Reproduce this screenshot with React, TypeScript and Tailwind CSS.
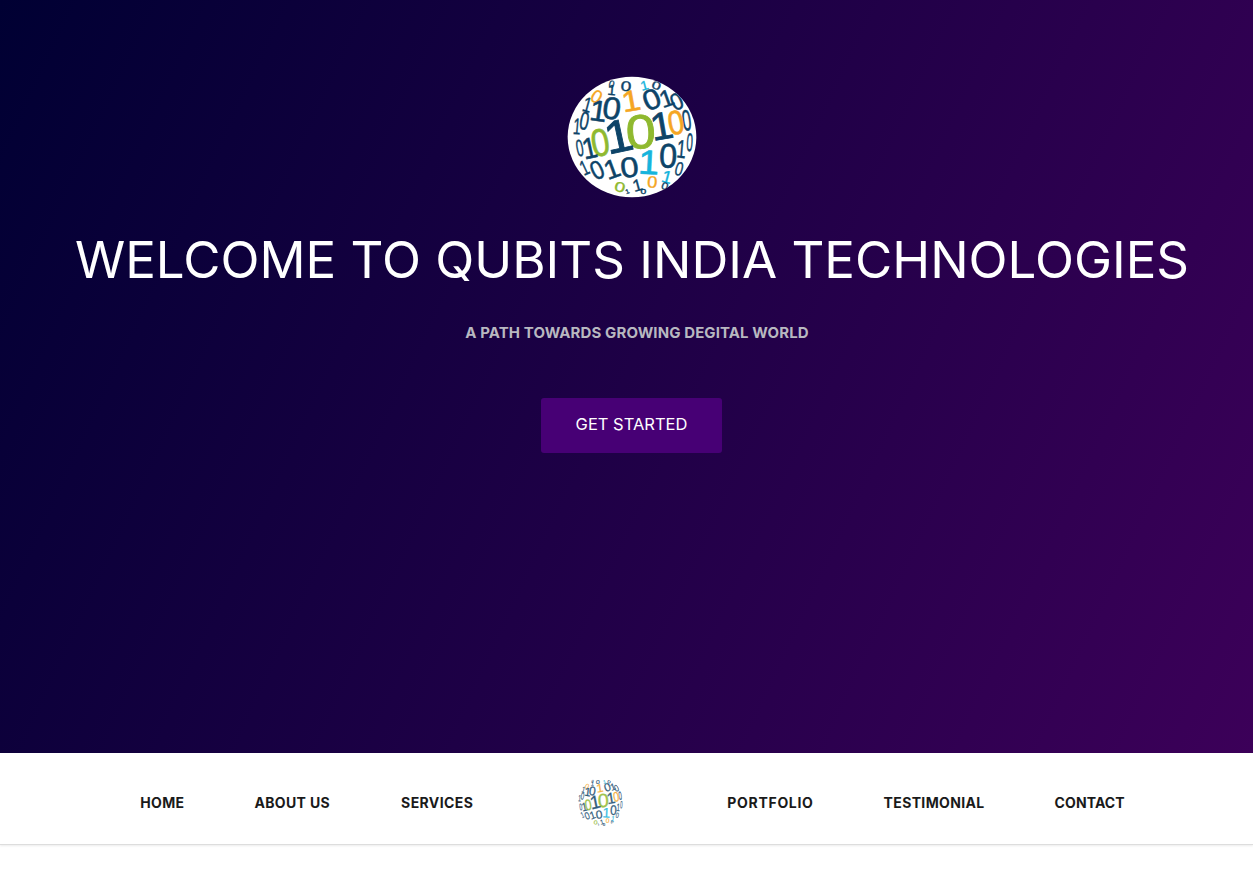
type G = [string, number, number, number, number, string, number?];
const D = "#0d4468", O = "#f5a623", L = "#8fb92f", C = "#16b4dc";
const glyphs: G[] = [
  ["0", 185, 70, 22, 15, D, 1], ["0", 228, 76, 30, 5, D, 1.4], ["1", 283, 74, 28, -15, C, 1.1], ["0", 320, 74, 24, 20, D, 1.5],
  ["0", 140, 107, 40, 30, O, 1], ["1", 185, 88, 32, 5, D, 1.05], ["1", 243, 120, 64, -10, O, 1.15], ["0", 305, 115, 62, -22, D, 1.1], ["1", 350, 112, 52, -20, D, 1.05], ["0", 380, 122, 52, -25, D, 0.9],
  ["1", 112, 132, 46, 15, D, 0.75], ["1", 145, 150, 64, 8, D, 1.05], ["0", 185, 142, 68, 8, D, 1.05], ["0", 410, 178, 64, -8, D, 0.55],
  ["0", 103, 180, 56, 10, D, 0.65], ["1", 80, 197, 50, 5, D, 0.6], ["0", 272, 212, 104, -4, L, 1.12], ["1", 205, 225, 100, -12, D, 1.1], ["0", 150, 245, 84, -10, L, 0.85], ["1", 335, 195, 84, -10, D, 1.05], ["0", 378, 185, 74, -10, O, 0.85],
  ["0", 88, 262, 52, -10, D, 0.55], ["1", 118, 262, 64, -12, D, 0.9], ["1", 395, 265, 56, 5, D, 0.65], ["0", 420, 245, 56, 3, D, 0.45], ["0", 355, 285, 74, 2, D, 0.95], ["1", 297, 305, 74, 3, C, 1.1],
  ["1", 102, 322, 46, -25, D, 0.65], ["0", 140, 328, 58, -25, D, 0.85], ["1", 185, 325, 58, -20, D, 1.05], ["0", 238, 320, 62, -8, D, 1.15], ["0", 388, 325, 42, 15, D, 0.75],
  ["0", 210, 380, 30, 15, L, 1.4], ["1", 262, 375, 36, -15, D, 1.05], ["0", 307, 365, 36, 5, O, 1.1], ["1", 352, 350, 38, 15, C, 1.05], ["0", 345, 378, 22, 20, D, 1.2], ["0", 280, 396, 14, 0, D, 1.6], ["1", 232, 394, 14, -20, D, 1.1],
];

function Globe({ className, id }: { className: string; id: string }) {
  return (
    <svg viewBox="50 46 392 368" preserveAspectRatio="none" className={className} aria-hidden="true">
      <defs>
        <clipPath id={id}>
          <ellipse cx="246" cy="230" rx="194" ry="182" />
        </clipPath>
      </defs>
      <ellipse cx="246" cy="230" rx="194" ry="182" fill="#ffffff" />
      <g clipPath={`url(#${id})`} fontFamily="'Liberation Sans', sans-serif">
        {glyphs.map(([c, x, y, h, r, f, s], i) => (
          <text
            key={i}
            transform={`translate(${x} ${y}) rotate(${r}) scale(${s ?? 1} 1)`}
            textAnchor="middle"
            y={h * 0.5}
            fontSize={h / 0.72}
            fill={f}
            stroke={f}
            strokeWidth={Math.max(1, h * 0.025)}
          >
            {c}
          </text>
        ))}
      </g>
    </svg>
  );
}

const font = "font-['Inter','Liberation_Sans',sans-serif]";

function NavLink({ children, className = "tracking-[0.35px]" }: { children: string; className?: string }) {
  return <a className={`text-[14px] font-bold leading-[20px] text-[#1a1a1a] whitespace-nowrap ${className}`}>{children}</a>;
}

export default function App() {
  return (
    <div className={`min-h-[886px] bg-white ${font}`}>
      <section className="flex h-[753px] flex-col items-center bg-[linear-gradient(115deg,#000033_0%,#3c0059_100%)] pl-[11px] pt-[76px]">
        <Globe id="g1" className="h-[122px] w-[130px]" />
        <h1 className="mt-[32px] whitespace-nowrap text-[51px] font-normal leading-[60px] text-white">
          WELCOME TO QUBITS INDIA TECHNOLOGIES
        </h1>
        <p className="ml-[10px] mt-[33px] text-[15px] font-bold leading-[20px] tracking-[0.1px] text-[#b8b8c0]">A PATH TOWARDS GROWING DEGITAL WORLD</p>
        <a className="mt-[55px] -ml-[1px] flex h-[55px] w-[181px] items-center justify-center rounded-[3px] bg-[#470075] pb-[3px] text-[16.5px] text-white">
          GET STARTED
        </a>
      </section>
      <nav className="flex h-[92px] items-center justify-center gap-[70px] pl-[12px] pt-[8px] border-b border-[#dddddd] shadow-[0_1px_2px_rgba(0,0,0,0.08)]">
        <NavLink>HOME</NavLink>
        <NavLink>ABOUT US</NavLink>
        <NavLink className="tracking-[0.4px] ml-[1px]">SERVICES</NavLink>
        <Globe id="g2" className="mx-[33px] h-[49px] w-[48px] opacity-85" />
        <NavLink className="tracking-[0.7px]">PORTFOLIO</NavLink>
        <NavLink>TESTIMONIAL</NavLink>
        <NavLink className="tracking-[0.1px]">CONTACT</NavLink>
      </nav>
    </div>
  );
}
